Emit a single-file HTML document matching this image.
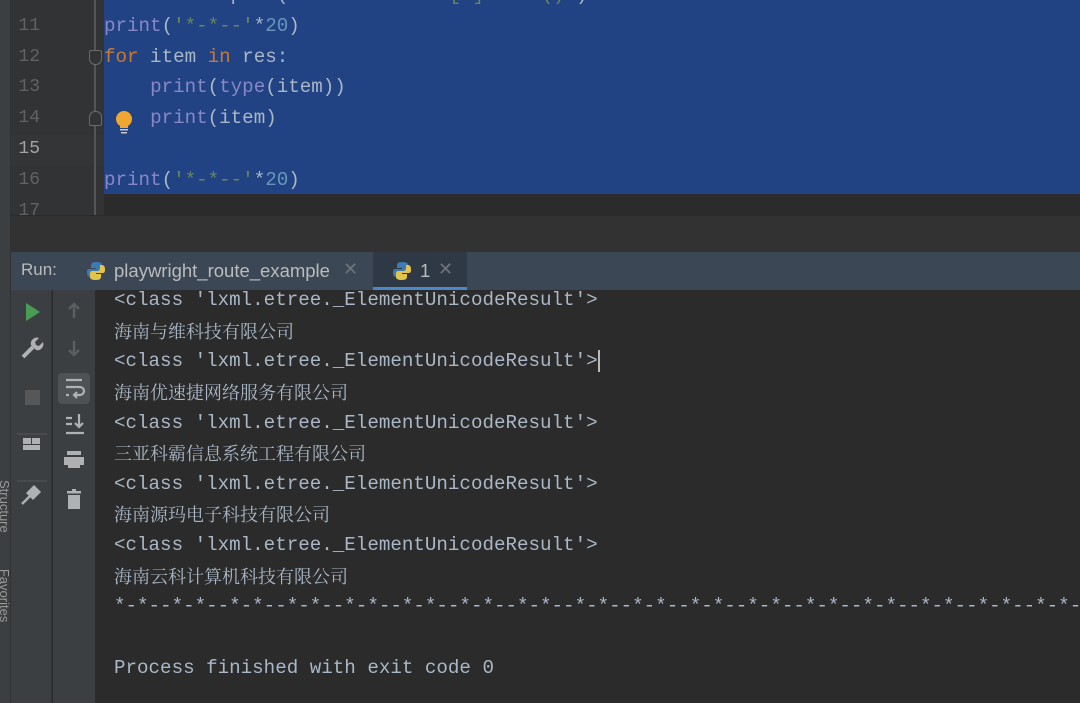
<!DOCTYPE html>
<html><head><meta charset="utf-8"><style>
*{margin:0;padding:0;box-sizing:border-box}
body{width:1080px;height:703px;overflow:hidden;background:#2b2b2b;position:relative;font-family:"Liberation Mono",monospace}
.abs{position:absolute}
.code{font-size:19.2px;white-space:pre;color:#a9b7c6}
.code div{height:30.8px;line-height:30.8px;overflow:visible}
.con div{height:30.65px;line-height:30.65px}
.ln{color:#606366;font-size:18px;width:40px;text-align:right}
.k{color:#cc7832}.f{color:#8888c6}.s{color:#6a8759}.n{color:#6897bb}
.cn{font-family:"Noto Serif CJK SC","Liberation Serif",serif;font-size:18px;color:#a9b7c6}
</style></head><body>
<div class="abs" style="left:0;top:0;width:11px;height:703px;background:#3c3f41;border-right:1px solid #323232"></div>
<div class="abs" style="left:11px;top:0;width:93px;height:215px;background:#313335"></div>
<div class="abs" style="left:11px;top:135px;width:93px;height:30px;background:#333537"></div>
<div class="abs" style="left:94px;top:0;width:2px;height:215px;background:#555"></div>
<div class="abs ln code" style="left:0;top:-20px;"><div>10</div><div>11</div><div>12</div><div>13</div><div>14</div><div style="color:#a4a3a3">15</div><div>16</div><div>17</div></div>
<div class="abs" style="left:89px;top:50px;width:13px;height:15px;border:1.5px solid #6a6a6a;border-radius:2px 2px 6px 6px;background:#313335"></div>
<div class="abs" style="left:89px;top:111px;width:13px;height:15px;border:1.5px solid #6a6a6a;border-radius:6px 6px 2px 2px;background:#313335"></div>
<div class="abs" style="left:104px;top:0;width:976px;height:194px;background:#214283"></div>
<svg class="abs" style="left:114px;top:110px" width="20" height="24" viewBox="0 0 20 24"><circle cx="10" cy="9" r="8" fill="#f0a732"/><rect x="6" y="15" width="8" height="3" fill="#f0a732"/><rect x="6" y="19" width="8" height="1.5" fill="#c9c9c9"/><rect x="7" y="22" width="6" height="1.5" fill="#c9c9c9"/></svg>
<div class="abs" style="left:104px;top:0;width:976px;height:215px;overflow:hidden">
<div class="abs code" style="left:0;top:-20px"><div>res = doc.xpath(<span class="s">'//div/ul/li/a[2]/text()'</span>)</div><div><span class="f">print</span>(<span class="s">'*-*--'</span>*<span class="n">20</span>)</div><div><span class="k">for</span> item <span class="k">in</span> res:</div><div>    <span class="f">print</span>(<span class="f">type</span>(item))</div><div>    <span class="f">print</span>(item)</div><div> </div><div><span class="f">print</span>(<span class="s">'*-*--'</span>*<span class="n">20</span>)</div></div></div>
<div class="abs" style="left:11px;top:215px;width:1069px;height:37px;background:#323232;border-top:1px solid #2a2a2a"></div>
<div class="abs" style="left:11px;top:252px;width:1069px;height:38px;background:#3b4754"></div>
<div class="abs" style="left:21px;top:260px;font-family:'Liberation Sans',sans-serif;font-size:17px;color:#bbb">Run:</div>
<svg class="abs" style="left:86px;top:261px" width="20" height="20" viewBox="0 0 20 20"><path d="M10 1C5 1 5 3 5 5v2h5v1H3C1 8 1 10 1 12s1 4 3 4h2v-3c0-2 1-3 3-3h5c1 0 2-1 2-2V4c0-2-2-3-6-3z" fill="#3d7ab3"/><path d="M10 19c5 0 5-2 5-4v-2h-5v-1h7c2 0 2-2 2-4s-1-4-3-4h-2v3c0 2-1 3-3 3H6c-1 0-2 1-2 2v4c0 2 2 3 6 3z" fill="#e3c44a"/></svg>
<div class="abs" style="left:114px;top:260px;font-family:'Liberation Sans',sans-serif;font-size:18.5px;color:#bbb">playwright_route_example</div>
<div class="abs" style="left:343px;top:259px;font-family:'Liberation Sans',sans-serif;font-size:18px;color:#6f737a">✕</div>
<div class="abs" style="left:373px;top:252px;width:94px;height:38px;background:#2e3945;border-bottom:3px solid #4a88c7"></div>
<svg class="abs" style="left:392px;top:261px" width="20" height="20" viewBox="0 0 20 20"><path d="M10 1C5 1 5 3 5 5v2h5v1H3C1 8 1 10 1 12s1 4 3 4h2v-3c0-2 1-3 3-3h5c1 0 2-1 2-2V4c0-2-2-3-6-3z" fill="#3d7ab3"/><path d="M10 19c5 0 5-2 5-4v-2h-5v-1h7c2 0 2-2 2-4s-1-4-3-4h-2v3c0 2-1 3-3 3H6c-1 0-2 1-2 2v4c0 2 2 3 6 3z" fill="#e3c44a"/></svg>
<div class="abs" style="left:420px;top:260px;font-family:'Liberation Sans',sans-serif;font-size:18.5px;color:#bbb">1</div>
<div class="abs" style="left:438px;top:259px;font-family:'Liberation Sans',sans-serif;font-size:18px;color:#6f737a">✕</div>
<div class="abs" style="left:11px;top:290px;width:41px;height:413px;background:#3c3f41;border-right:1px solid #323232"></div>
<div class="abs" style="left:53px;top:290px;width:42px;height:413px;background:#3c3f41"></div>
<svg class="abs" style="left:11px;top:290px" width="84" height="413" viewBox="0 0 84 413">
<path d="M15 13l14 9-14 9z" fill="#499c54"/>
<path d="M12 67l10-10" stroke="#afb1b3" stroke-width="4" fill="none"/>
<path d="M20 55a6 6 0 0 1 8-7l-4 4 1 3 3 1 4-4a6 6 0 0 1-7 8z" fill="#afb1b3"/>
<line x1="6" y1="144" x2="36" y2="144" stroke="#555"/>
<rect x="14" y="100" width="15" height="15" fill="#555759"/>
<line x1="6" y1="191" x2="36" y2="191" stroke="#555"/>
<rect x="12" y="148" width="8" height="6" fill="#afb1b3"/><rect x="21" y="148" width="8" height="6" fill="#afb1b3"/><rect x="12" y="155" width="17" height="5" fill="#afb1b3"/>
<path d="M11 214l8-8" stroke="#afb1b3" stroke-width="2.5"/>
<path d="M15 203l8-8 7 7-8 8z" fill="#afb1b3"/>
<path d="M63 14v14m-5-9l5-5 5 5" stroke="#5b5d5f" stroke-width="2.5" fill="none"/>
<path d="M63 51v14m-5-5l5 5 5-5" stroke="#5b5d5f" stroke-width="2.5" fill="none"/>
<rect x="47" y="83" width="32" height="31" rx="4" fill="#4e5254"/>
<path d="M55 90h16M55 97h14a4 4 0 0 1 0 8h-5m2-3l-3 3 3 3M55 105h3" stroke="#afb1b3" stroke-width="2.2" fill="none"/>
<path d="M55 128h6M55 134h6M55 143h18M68 124v13m-4-4l4 4 4-4" stroke="#afb1b3" stroke-width="2.2" fill="none"/>
<path d="M56 165h14v-4H56z" fill="#afb1b3"/><rect x="53" y="167" width="20" height="8" fill="#afb1b3"/><rect x="57" y="174" width="12" height="4" fill="#afb1b3"/>
<rect x="56" y="201" width="14" height="2.5" fill="#afb1b3"/><rect x="61" y="199" width="4" height="2" fill="#afb1b3"/><rect x="57" y="205" width="12" height="14" fill="#afb1b3"/>
</svg>
<div class="abs" style="left:0;top:480px;width:11px;height:223px;overflow:hidden"><div style="transform:rotate(90deg);transform-origin:0 0;position:absolute;left:12px;top:0;font-family:'Liberation Sans',sans-serif;font-size:13px;color:#999;white-space:nowrap">Structure&nbsp;&nbsp;&nbsp;&nbsp;&nbsp;&nbsp;&nbsp;&nbsp;&nbsp;&nbsp;Favorites</div></div>
<div class="abs" style="left:114px;top:290px;width:966px;height:413px;overflow:hidden">
<div class="abs code con" style="left:0;top:-5px"><div>&lt;class 'lxml.etree._ElementUnicodeResult'&gt;</div><div><span class="cn">海南与维科技有限公司</span></div><div>&lt;class 'lxml.etree._ElementUnicodeResult'&gt;<span style="border-left:2px solid #bbb"></span></div><div><span class="cn">海南优速捷网络服务有限公司</span></div><div>&lt;class 'lxml.etree._ElementUnicodeResult'&gt;</div><div><span class="cn">三亚科霸信息系统工程有限公司</span></div><div>&lt;class 'lxml.etree._ElementUnicodeResult'&gt;</div><div><span class="cn">海南源玛电子科技有限公司</span></div><div>&lt;class 'lxml.etree._ElementUnicodeResult'&gt;</div><div><span class="cn">海南云科计算机科技有限公司</span></div><div>*-*--*-*--*-*--*-*--*-*--*-*--*-*--*-*--*-*--*-*--*-*--*-*--*-*--*-*--*-*--*-*--*-*--*-*--</div><div> </div><div>Process finished with exit code 0</div></div></div>
</body></html>
